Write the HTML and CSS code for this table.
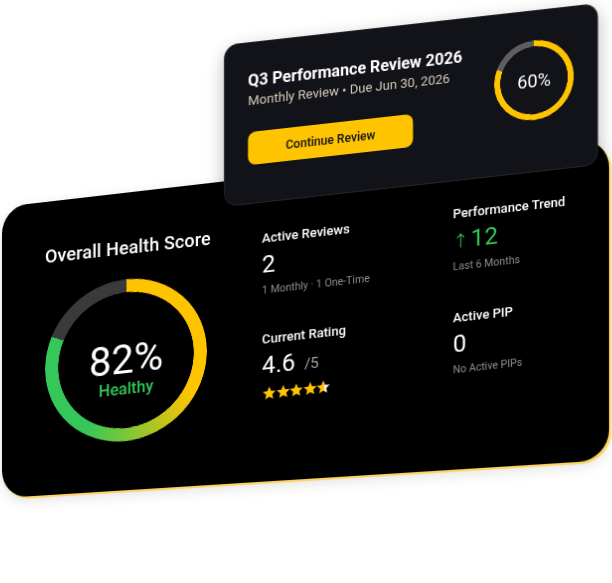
FILE: index.html
```html
<!DOCTYPE html>
<html lang="en">
<head>
<meta charset="utf-8">
<title>Health Score</title>
<link rel="stylesheet" href="styles.css">
</head>
<body>
<div class="scene">
  <section class="health-card">
    <div class="health-left">
      <h2 class="health-title">Overall Health Score</h2>
      <div class="score-ring">
        <span class="score-value">82%</span>
        <span class="score-status">Healthy</span>
      </div>
    </div>
    <div class="stats">
      <div class="stat">
        <div class="stat-label">Active Reviews</div>
        <div class="stat-value">2</div>
        <div class="stat-sub">1 Monthly · 1 One-Time</div>
      </div>
      <div class="stat stat-raised">
        <div class="stat-label">Performance Trend</div>
        <div class="stat-value trend"><span class="trend-arrow">↑</span>12</div>
        <div class="stat-sub">Last 6 Months</div>
      </div>
      <div class="stat">
        <div class="stat-label">Current Rating</div>
        <div class="stat-value">4.6 <span class="stat-of">/5</span></div>
        <div class="stars">
          <svg viewBox="0 0 24 24" class="star"><polygon points="12,1 15.1,8.1 22.8,8.8 17,14 18.7,21.6 12,17.7 5.3,21.6 7,14 1.2,8.8 8.9,8.1"/></svg>
          <svg viewBox="0 0 24 24" class="star"><polygon points="12,1 15.1,8.1 22.8,8.8 17,14 18.7,21.6 12,17.7 5.3,21.6 7,14 1.2,8.8 8.9,8.1"/></svg>
          <svg viewBox="0 0 24 24" class="star"><polygon points="12,1 15.1,8.1 22.8,8.8 17,14 18.7,21.6 12,17.7 5.3,21.6 7,14 1.2,8.8 8.9,8.1"/></svg>
          <svg viewBox="0 0 24 24" class="star"><polygon points="12,1 15.1,8.1 22.8,8.8 17,14 18.7,21.6 12,17.7 5.3,21.6 7,14 1.2,8.8 8.9,8.1"/></svg>
          <svg viewBox="0 0 24 24" class="star">
            <defs><linearGradient id="partFill" x1="0" y1="0" x2="1" y2="0"><stop offset="0.6" stop-color="#ffc400"/><stop offset="0.6" stop-color="#f1f1f1"/></linearGradient></defs>
            <polygon fill="url(#partFill)" points="12,1 15.1,8.1 22.8,8.8 17,14 18.7,21.6 12,17.7 5.3,21.6 7,14 1.2,8.8 8.9,8.1"/>
          </svg>
        </div>
      </div>
      <div class="stat">
        <div class="stat-label">Active PIP</div>
        <div class="stat-value">0</div>
        <div class="stat-sub">No Active PIPs</div>
      </div>
    </div>
  </section>

  <section class="review-card">
    <div class="review-info">
      <h3 class="review-title">Q3 Performance Review 2026</h3>
      <p class="review-meta">Monthly Review • Due Jun 30, 2026</p>
      <button class="review-btn" type="button">Continue Review</button>
    </div>
    <div class="progress-ring"><span>60%</span></div>
  </section>
</div>
</body>
</html>
```

FILE: styles.css
```css
* { box-sizing: border-box; }

html, body {
  margin: 0;
  padding: 0;
  background: #ffffff;
}

body {
  font-family: Roboto, "Liberation Sans", Arial, sans-serif;
  color: #ffffff;
  overflow: hidden;
}

.scene {
  position: relative;
  width: 612px;
  height: 583px;
  padding: 207px 0 0 2px;
}

/* ---------- main card ---------- */
.health-card {
  position: relative;
  isolation: isolate;
  width: 607px;
  height: 291px;
  display: flex;
  align-items: flex-start;
  padding: 44px 0 0 43px;
  transform: skewY(-6.4deg);
  transform-origin: 0 0;
}

.health-card::before {
  content: "";
  position: absolute;
  inset: 0;
  z-index: -1;
  background: #000000;
  border-radius: 27px;
  transform: matrix3d(0.900929, -0.002841, 0, -0.00016321, 0, 1, 0, 0, 0, 0, 1, 0, 0, 0, 0, 1);
  transform-origin: 0 0;
  box-shadow: 2px 2px 1px rgba(255, 204, 60, 0.8), 0 4px 14px rgba(0, 0, 0, 0.12);
}

.health-left {
  width: 162px;
  flex: none;
}

.health-title {
  margin: 0;
  font-size: 18px;
  line-height: 22px;
  font-weight: 500;
  white-space: nowrap;
  letter-spacing: 0.1px;
}

.score-ring {
  position: relative;
  width: 162px;
  height: 162px;
  margin-top: 20px;
  display: flex;
  flex-direction: column;
  align-items: center;
  padding-top: 61px;
}

.score-ring::before {
  content: "";
  position: absolute;
  inset: 0;
  border-radius: 50%;
  background: conic-gradient(#ffc400 0deg, #ffc400 122deg, #35c759 212deg, #35c759 293deg, #3a3a3a 293deg, #3a3a3a 360deg);
  -webkit-mask: radial-gradient(farthest-side, transparent calc(100% - 13.5px), #000 calc(100% - 13px));
  mask: radial-gradient(farthest-side, transparent calc(100% - 13.5px), #000 calc(100% - 13px));
}

.score-value {
  font-size: 40px;
  line-height: 40px;
  font-weight: 400;
}

.score-status {
  margin-top: -1px;
  font-size: 16px;
  line-height: 20px;
  font-weight: 500;
  color: #35c759;
}

/* ---------- stats ---------- */
.stats {
  display: grid;
  grid-template-columns: 191px auto;
  row-gap: 34px;
  margin: 9px 0 0 55px;
}

.stat-raised { margin-top: -3px; }

.stat-label {
  font-size: 13px;
  line-height: 16px;
  font-weight: 500;
  white-space: nowrap;
}

.stat-value {
  margin-top: 4px;
  font-size: 24px;
  line-height: 28px;
  font-weight: 400;
  white-space: nowrap;
}

.stat-of {
  font-size: 15px;
  color: #a3a3a3;
  margin-left: 3px;
}

.trend { color: #35c759; }

.trend-arrow {
  font-family: "DejaVu Sans", sans-serif;
  font-size: 19px;
  font-weight: 300;
  margin-right: 2px;
}

.stat-sub {
  margin-top: 5px;
  font-size: 10.5px;
  line-height: 14px;
  color: #8e8e8e;
  white-space: nowrap;
}

.stars {
  margin-top: 4px;
  height: 15px;
  display: flex;
  align-items: center;
}

.star {
  width: 14.5px;
  height: 14.5px;
  margin-right: -1px;
  fill: #ffc400;
  flex: none;
}

/* ---------- review card ---------- */
.review-card {
  position: absolute;
  left: 224px;
  top: 45px;
  width: 374px;
  height: 162px;
  display: flex;
  justify-content: space-between;
  align-items: flex-start;
  padding: 28px 23px 0 23px;
  background: #121318;
  border: 1px solid #24262c;
  border-radius: 14px;
  transform: skewY(-6.4deg);
  transform-origin: 0 0;
  box-shadow: 0 6px 18px rgba(0, 0, 0, 0.28);
}

.review-info {
  display: flex;
  flex-direction: column;
  align-items: flex-start;
}

.review-title {
  margin: 0;
  font-size: 16px;
  line-height: 20px;
  font-weight: 700;
  white-space: nowrap;
}

.review-meta {
  margin: 1px 0 0;
  font-size: 13px;
  line-height: 18px;
  color: #d6cbb8;
  white-space: nowrap;
}

.review-btn {
  margin-top: 22px;
  width: 165px;
  height: 33px;
  border: 0;
  border-radius: 8px;
  background: #ffc400;
  color: #1c1c1c;
  font-family: Roboto, "Liberation Sans", Arial, sans-serif;
  font-size: 12px;
  font-weight: 600;
  padding: 0;
}

.progress-ring {
  position: relative;
  width: 80px;
  height: 80px;
  margin-top: 1px;
  flex: none;
  display: flex;
  align-items: center;
  justify-content: center;
  font-size: 18px;
  font-weight: 400;
}

.progress-ring::before {
  content: "";
  position: absolute;
  inset: 0;
  border-radius: 50%;
  background: conic-gradient(#ffc400 0deg, #ffc400 291deg, #5e5e5e 291deg, #5e5e5e 360deg);
  -webkit-mask: radial-gradient(farthest-side, transparent calc(100% - 6.5px), #000 calc(100% - 6px));
  mask: radial-gradient(farthest-side, transparent calc(100% - 6.5px), #000 calc(100% - 6px));
}

.progress-ring span { position: relative; }
```
